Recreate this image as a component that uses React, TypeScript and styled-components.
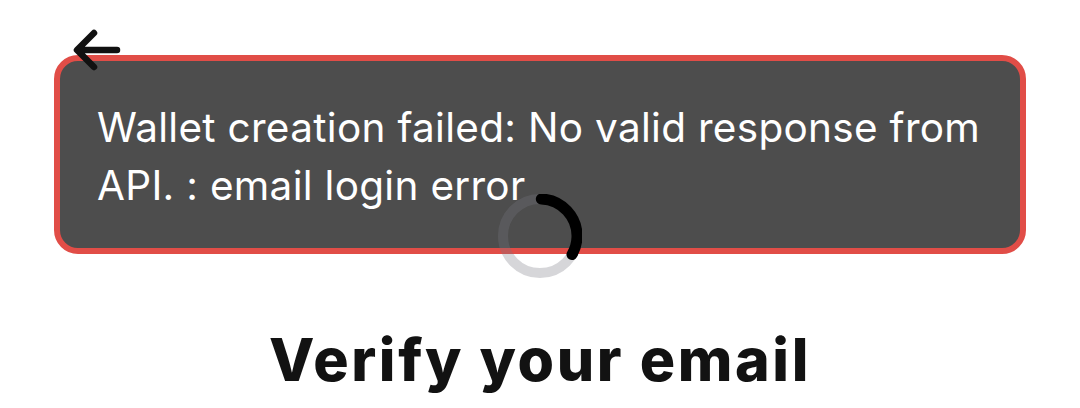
import React from 'react'
import styled, { createGlobalStyle } from 'styled-components'

const GlobalStyle = createGlobalStyle`
  html, body {
    margin: 0;
    padding: 0;
    background: #ffffff;
    font-family: Inter, 'Noto Sans', sans-serif;
  }
`

const Page = styled.div`
  position: relative;
  width: 1080px;
  height: 408px;
  overflow: hidden;
  display: flex;
  flex-direction: column;
  align-items: center;
`

const Header = styled.div`
  width: 100%;
  display: flex;
  padding: 29px 0 0 73px;
  box-sizing: border-box;
`

const BackButton = styled.button`
  position: relative;
  z-index: 3;
  border: none;
  background: none;
  padding: 0;
  display: flex;
  cursor: pointer;
`

const SpinnerWrap = styled.div`
  position: relative;
  z-index: 3;
  margin-top: 121px;
  width: 84px;
  height: 84px;
`

const Heading = styled.h1`
  margin: 46px 0 0;
  font-family: Inter, sans-serif;
  font-weight: 800;
  font-size: 59px;
  line-height: 72px;
  letter-spacing: 2.6px;
  color: #121212;
`

const Toast = styled.div`
  position: absolute;
  z-index: 2;
  left: 54px;
  top: 55px;
  width: 972px;
  height: 199px;
  box-sizing: border-box;
  border: 6px solid #e14d47;
  border-radius: 24px;
  background: #4d4d4d;
  padding: 38px 30px 0 37px;
`

const ToastText = styled.p`
  margin: 0;
  color: #ffffff;
  font-family: Inter, sans-serif;
  font-weight: 400;
  font-size: 40.5px;
  line-height: 58px;
  letter-spacing: 0.3px;
`

function BackArrow() {
  return (
    <svg width="52" height="44" viewBox="0 0 52 44" fill="none">
      <path
        d="M44 21H5 M21 4L4 21L21 38"
        stroke="#111"
        strokeWidth="6.5"
        strokeLinecap="round"
        strokeLinejoin="round"
      />
    </svg>
  )
}

function Spinner() {
  // arc from 12 o'clock running clockwise
  const r = 37
  const c = 2 * Math.PI * r
  const arc = c * (118 / 360)
  return (
    <svg width="84" height="84" viewBox="0 0 84 84">
      <circle cx="42" cy="42" r={r} fill="none" stroke="rgba(120,120,128,0.3)" strokeWidth="10" />
      <circle
        cx="42"
        cy="42"
        r={r}
        fill="none"
        stroke="#000"
        strokeWidth="11"
        strokeLinecap="round"
        strokeDasharray={`${arc} ${c}`}
        transform="rotate(-88 42 42)"
      />
    </svg>
  )
}

export default function App() {
  return (
    <>
      <GlobalStyle />
      <Page>
        <Header>
          <BackButton aria-label="Back">
            <BackArrow />
          </BackButton>
        </Header>
        <SpinnerWrap>
          <Spinner />
        </SpinnerWrap>
        <Heading>Verify your email</Heading>
        <Toast role="alert">
          <ToastText>
            Wallet creation failed: No valid response from API. : email login error
          </ToastText>
        </Toast>
      </Page>
    </>
  )
}
